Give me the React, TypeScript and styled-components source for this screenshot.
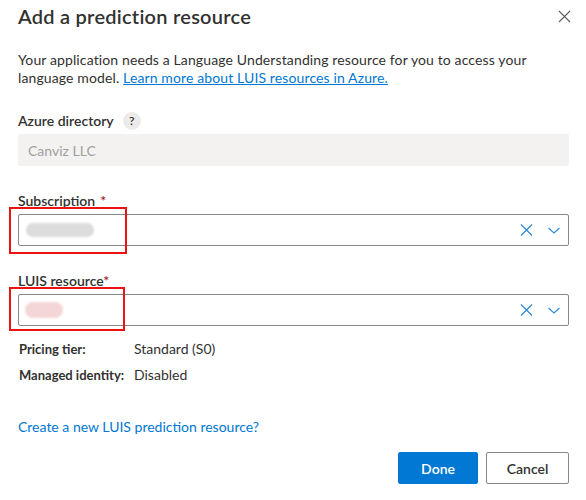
import React from "react";
import styled, { createGlobalStyle } from "styled-components";

const GlobalStyle = createGlobalStyle`
  html, body {
    margin: 0;
    padding: 0;
    background: #ffffff;
  }
  body {
    font-family: "Segoe UI", Lato, "Liberation Sans", sans-serif;
    color: #323130;
  }
`;

const Dialog = styled.div`
  width: 586px;
  height: 500px;
  box-sizing: border-box;
  padding: 2px 17px 0 18px;
  background: #ffffff;
`;

const Header = styled.div`
  display: flex;
  align-items: center;
  justify-content: space-between;
  height: 28px;
`;

const Title = styled.h1`
  margin: 0;
  font-size: 20px;
  line-height: 28px;
  font-weight: 600;
  letter-spacing: 0.25px;
  color: #323130;
`;

const CloseButton = styled.button`
  display: flex;
  align-items: center;
  justify-content: center;
  width: 24px;
  height: 24px;
  margin-right: -7px;
  padding: 0;
  border: none;
  background: transparent;
  color: #605e5c;
`;

const Description = styled.p`
  margin: 21px 0 0;
  font-size: 14px;
  line-height: 18px;
  letter-spacing: 0.12px;
  color: #323130;
  max-width: 540px;
`;

const Link = styled.a<{ $underline?: boolean }>`
  color: #0078d4;
  text-decoration: ${(p) => (p.$underline ? "underline" : "none")};
`;

const Field = styled.div<{ $gap: number }>`
  margin-top: ${(p) => p.$gap}px;
  position: relative;
`;

const Label = styled.div`
  display: flex;
  align-items: center;
  gap: 6px;
  height: 20px;
  font-size: 14px;
  font-weight: 600;
  line-height: 20px;
  margin-bottom: 3px;
`;

const Required = styled.span<{ $space?: boolean }>`
  color: #a4262c;
  margin-left: ${(p) => (p.$space ? "5px" : "0")};
`;

const HelpBadge = styled.span`
  display: inline-flex;
  align-items: center;
  justify-content: center;
  width: 18px;
  height: 18px;
  border-radius: 50%;
  background: #edebe9;
  font-size: 12px;
  font-weight: 600;
  color: #323130;
  margin-left: 3px;
`;

const DisabledInput = styled.div`
  display: flex;
  align-items: center;
  height: 32px;
  padding: 0 10px;
  background: #f3f2f1;
  border-radius: 2px;
  font-size: 14px;
  color: #a19f9d;
`;

const Select = styled.div`
  display: flex;
  align-items: center;
  height: 32px;
  border: 1px solid #8a8886;
  border-radius: 2px;
  padding: 0 8px 0 6px;
  box-sizing: border-box;
`;

const Smudge = styled.div<{ $w: number; $h: number; $tint: string }>`
  width: ${(p) => p.$w}px;
  height: ${(p) => p.$h}px;
  border-radius: 8px;
  background: ${(p) => p.$tint};
  filter: blur(1.2px);
`;

const SelectIcons = styled.div`
  margin-left: auto;
  display: flex;
  align-items: center;
  gap: 15px;
  color: #2b88d8;
`;

const Annotation = styled.div<{ $top: number; $w: number; $h: number }>`
  position: absolute;
  left: -9px;
  top: ${(p) => p.$top}px;
  width: ${(p) => p.$w}px;
  height: ${(p) => p.$h}px;
  border: 2px solid #ee1111;
  box-sizing: border-box;
  pointer-events: none;
`;

const Details = styled.div`
  margin-top: 13px;
  display: grid;
  grid-template-columns: 116px 1fr;
  row-gap: 6px;
  line-height: 20px;
`;

const DetailKey = styled.div`
  font-size: 13px;
  font-weight: 700;
  padding-left: 1px;
  white-space: nowrap;
`;

const DetailValue = styled.div`
  font-size: 14px;
`;

const CreateLink = styled.div`
  margin-top: 32px;
  font-size: 14px;
  line-height: 20px;
`;

const Footer = styled.div`
  margin-top: 15px;
  display: flex;
  justify-content: flex-end;
  gap: 8px;
`;

const Button = styled.button<{ $primary?: boolean }>`
  height: 32px;
  padding: 0;
  width: ${(p) => (p.$primary ? "80px" : "83px")};
  border-radius: 2px;
  font-family: inherit;
  font-size: 14px;
  font-weight: 600;
  border: 1px solid ${(p) => (p.$primary ? "#0078d4" : "#8a8886")};
  background: ${(p) => (p.$primary ? "#0078d4" : "#ffffff")};
  color: ${(p) => (p.$primary ? "#ffffff" : "#323130")};
`;

const ClearIcon = () => (
  <svg width="13" height="12" viewBox="0 0 13 12" fill="none" stroke="currentColor" strokeWidth="1.2">
    <path d="M1 0.5l11 11M12 0.5L1 11.5" />
  </svg>
);

const ChevronIcon = () => (
  <svg width="12" height="7" viewBox="0 0 12 7" fill="none" stroke="currentColor" strokeWidth="1.1">
    <path d="M0.5 1l5.5 5 5.5-5" />
  </svg>
);

export default function App() {
  return (
    <>
      <GlobalStyle />
      <Dialog>
        <Header>
          <Title>Add a prediction resource</Title>
          <CloseButton aria-label="Close">
            <svg width="13" height="13" viewBox="0 0 13 13" fill="none" stroke="currentColor" strokeWidth="1.1">
              <path d="M1 1l11 11M12 1L1 12" />
            </svg>
          </CloseButton>
        </Header>

        <Description>
          Your application needs a Language Understanding resource for you to access your language model.{" "}
          <Link $underline href="#">
            Learn more about LUIS resources in Azure.
          </Link>
        </Description>

        <Field $gap={24}>
          <Label>
            Azure directory <HelpBadge>?</HelpBadge>
          </Label>
          <DisabledInput>Canviz LLC</DisabledInput>
        </Field>

        <Field $gap={25}>
          <Label>
            <span>
              Subscription<Required $space>*</Required>
            </span>
          </Label>
          <Select>
            <Smudge $w={68} $h={14} $tint="#dcdcdc" style={{ marginLeft: 1 }} />
            <SelectIcons>
              <ClearIcon />
              <ChevronIcon />
            </SelectIcons>
          </Select>
          <Annotation $top={16} $w={118} $h={47} />
        </Field>

        <Field $gap={25}>
          <Label>
            <span>
              LUIS resource<Required>*</Required>
            </span>
          </Label>
          <Select>
            <Smudge $w={38} $h={16} $tint="#f5d6d6" />
            <SelectIcons>
              <ClearIcon />
              <ChevronIcon />
            </SelectIcons>
          </Select>
          <Annotation $top={16} $w={116} $h={44} />
        </Field>

        <Details>
          <DetailKey>Pricing tier:</DetailKey>
          <DetailValue>Standard (S0)</DetailValue>
          <DetailKey>Managed identity:</DetailKey>
          <DetailValue>Disabled</DetailValue>
        </Details>

        <CreateLink>
          <Link href="#">Create a new LUIS prediction resource?</Link>
        </CreateLink>

        <Footer>
          <Button $primary>Done</Button>
          <Button>Cancel</Button>
        </Footer>
      </Dialog>
    </>
  );
}
